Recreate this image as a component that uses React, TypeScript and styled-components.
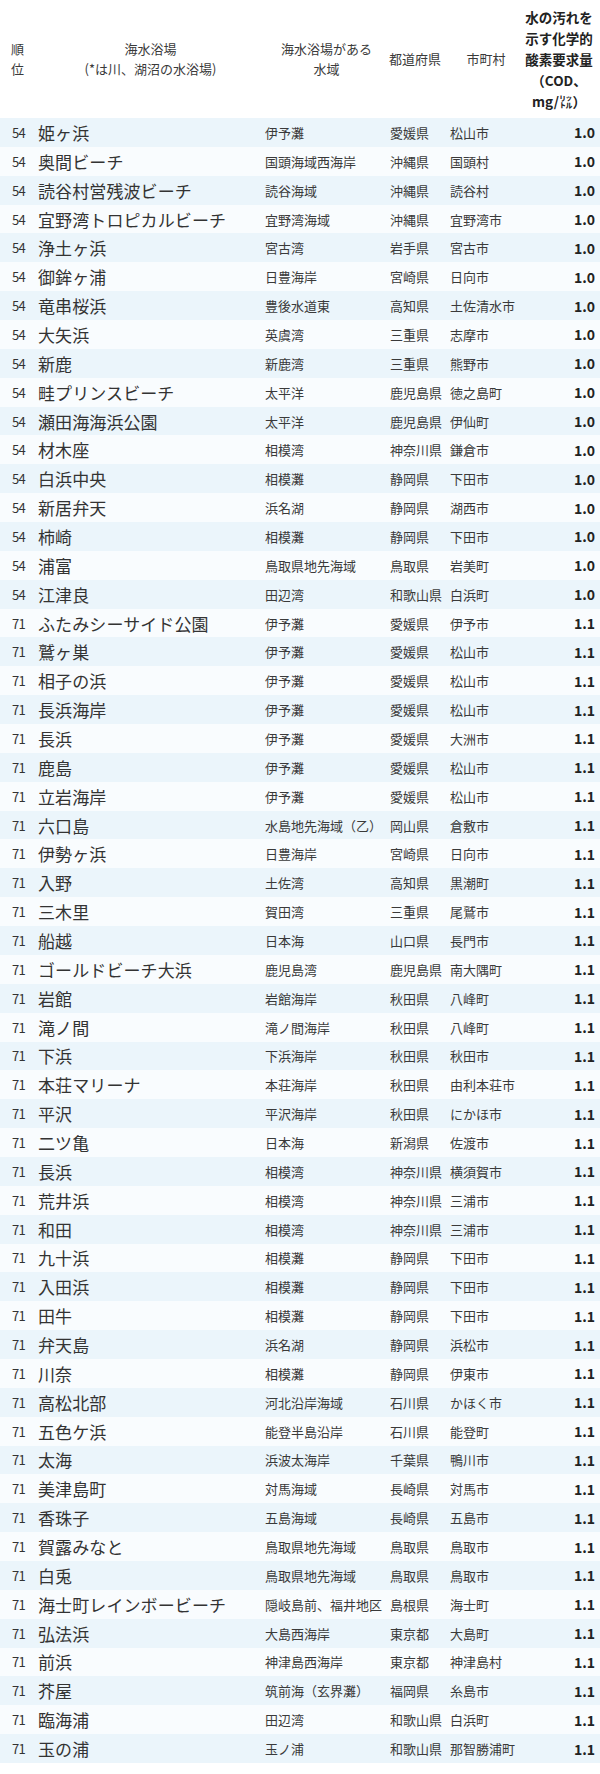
import React from "react";
import styled, { createGlobalStyle, css } from "styled-components";

const GlobalStyle = createGlobalStyle`
  html, body {
    margin: 0;
    padding: 0;
    background: #ffffff;
  }
  body {
    font-family: "Noto Sans CJK JP", "Noto Sans", sans-serif;
    color: #333333;
  }
`;

const COLS = "26px 227px 125px 60px 1fr 72px";

const Table = styled.div`
  width: 600px;
  display: flex;
  flex-direction: column;
  padding-bottom: 11px;
`;

const HeaderRow = styled.div`
  display: grid;
  grid-template-columns: ${COLS};
  height: 118px;
  padding: 0 5px 0 11px;
  align-items: center;
  background: #ffffff;
`;

const HeadCell = styled.div<{ $align?: "left" | "center"; $bold?: boolean }>`
  font-size: 13px;
  line-height: 20px;
  color: #3a3a3a;
  text-align: ${(p) => p.$align ?? "center"};
  white-space: nowrap;
  ${(p) =>
    p.$bold &&
    css`
      font-weight: 700;
      font-size: 13.5px;
      line-height: 21px;
      color: #222222;
    `}
`;

const Row = styled.div<{ $odd: boolean }>`
  display: grid;
  grid-template-columns: ${COLS};
  height: 28.86px;
  padding: 0 5px 0 12px;
  align-items: center;
  background: ${(p) => (p.$odd ? "#ebf5fb" : "#f9fcfe")};
  white-space: nowrap;
`;

const Rank = styled.div`
  font-size: 13px;
  color: #333333;
  letter-spacing: -0.6px;
`;

const Name = styled.div`
  font-size: 17px;
  color: #333333;
  letter-spacing: 0.1px;
`;

const Small = styled.div`
  font-size: 13px;
  color: #3a3a3a;
`;

const Value = styled.div`
  font-size: 14px;
  font-weight: 700;
  color: #222222;
  text-align: right;
`;

type Item = [string, string, string, string, string, string];

const rows: Item[] = [
  ["54", "姫ヶ浜", "伊予灘", "愛媛県", "松山市", "1.0"],
  ["54", "奥間ビーチ", "国頭海域西海岸", "沖縄県", "国頭村", "1.0"],
  ["54", "読谷村営残波ビーチ", "読谷海域", "沖縄県", "読谷村", "1.0"],
  ["54", "宜野湾トロピカルビーチ", "宜野湾海域", "沖縄県", "宜野湾市", "1.0"],
  ["54", "浄土ヶ浜", "宮古湾", "岩手県", "宮古市", "1.0"],
  ["54", "御鉾ヶ浦", "日豊海岸", "宮崎県", "日向市", "1.0"],
  ["54", "竜串桜浜", "豊後水道東", "高知県", "土佐清水市", "1.0"],
  ["54", "大矢浜", "英虞湾", "三重県", "志摩市", "1.0"],
  ["54", "新鹿", "新鹿湾", "三重県", "熊野市", "1.0"],
  ["54", "畦プリンスビーチ", "太平洋", "鹿児島県", "徳之島町", "1.0"],
  ["54", "瀬田海海浜公園", "太平洋", "鹿児島県", "伊仙町", "1.0"],
  ["54", "材木座", "相模湾", "神奈川県", "鎌倉市", "1.0"],
  ["54", "白浜中央", "相模灘", "静岡県", "下田市", "1.0"],
  ["54", "新居弁天", "浜名湖", "静岡県", "湖西市", "1.0"],
  ["54", "柿崎", "相模灘", "静岡県", "下田市", "1.0"],
  ["54", "浦富", "鳥取県地先海域", "鳥取県", "岩美町", "1.0"],
  ["54", "江津良", "田辺湾", "和歌山県", "白浜町", "1.0"],
  ["71", "ふたみシーサイド公園", "伊予灘", "愛媛県", "伊予市", "1.1"],
  ["71", "鷲ヶ巣", "伊予灘", "愛媛県", "松山市", "1.1"],
  ["71", "相子の浜", "伊予灘", "愛媛県", "松山市", "1.1"],
  ["71", "長浜海岸", "伊予灘", "愛媛県", "松山市", "1.1"],
  ["71", "長浜", "伊予灘", "愛媛県", "大洲市", "1.1"],
  ["71", "鹿島", "伊予灘", "愛媛県", "松山市", "1.1"],
  ["71", "立岩海岸", "伊予灘", "愛媛県", "松山市", "1.1"],
  ["71", "六口島", "水島地先海域（乙）", "岡山県", "倉敷市", "1.1"],
  ["71", "伊勢ヶ浜", "日豊海岸", "宮崎県", "日向市", "1.1"],
  ["71", "入野", "土佐湾", "高知県", "黒潮町", "1.1"],
  ["71", "三木里", "賀田湾", "三重県", "尾鷲市", "1.1"],
  ["71", "船越", "日本海", "山口県", "長門市", "1.1"],
  ["71", "ゴールドビーチ大浜", "鹿児島湾", "鹿児島県", "南大隅町", "1.1"],
  ["71", "岩館", "岩館海岸", "秋田県", "八峰町", "1.1"],
  ["71", "滝ノ間", "滝ノ間海岸", "秋田県", "八峰町", "1.1"],
  ["71", "下浜", "下浜海岸", "秋田県", "秋田市", "1.1"],
  ["71", "本荘マリーナ", "本荘海岸", "秋田県", "由利本荘市", "1.1"],
  ["71", "平沢", "平沢海岸", "秋田県", "にかほ市", "1.1"],
  ["71", "二ツ亀", "日本海", "新潟県", "佐渡市", "1.1"],
  ["71", "長浜", "相模湾", "神奈川県", "横須賀市", "1.1"],
  ["71", "荒井浜", "相模湾", "神奈川県", "三浦市", "1.1"],
  ["71", "和田", "相模湾", "神奈川県", "三浦市", "1.1"],
  ["71", "九十浜", "相模灘", "静岡県", "下田市", "1.1"],
  ["71", "入田浜", "相模灘", "静岡県", "下田市", "1.1"],
  ["71", "田牛", "相模灘", "静岡県", "下田市", "1.1"],
  ["71", "弁天島", "浜名湖", "静岡県", "浜松市", "1.1"],
  ["71", "川奈", "相模灘", "静岡県", "伊東市", "1.1"],
  ["71", "高松北部", "河北沿岸海域", "石川県", "かほく市", "1.1"],
  ["71", "五色ケ浜", "能登半島沿岸", "石川県", "能登町", "1.1"],
  ["71", "太海", "浜波太海岸", "千葉県", "鴨川市", "1.1"],
  ["71", "美津島町", "対馬海域", "長崎県", "対馬市", "1.1"],
  ["71", "香珠子", "五島海域", "長崎県", "五島市", "1.1"],
  ["71", "賀露みなと", "鳥取県地先海域", "鳥取県", "鳥取市", "1.1"],
  ["71", "白兎", "鳥取県地先海域", "鳥取県", "鳥取市", "1.1"],
  ["71", "海士町レインボービーチ", "隠岐島前、福井地区", "島根県", "海士町", "1.1"],
  ["71", "弘法浜", "大島西海岸", "東京都", "大島町", "1.1"],
  ["71", "前浜", "神津島西海岸", "東京都", "神津島村", "1.1"],
  ["71", "芥屋", "筑前海（玄界灘）", "福岡県", "糸島市", "1.1"],
  ["71", "臨海浦", "田辺湾", "和歌山県", "白浜町", "1.1"],
  ["71", "玉の浦", "玉ノ浦", "和歌山県", "那智勝浦町", "1.1"],
];

export default function App() {
  return (
    <>
      <GlobalStyle />
      <Table>
        <HeaderRow>
          <HeadCell $align="left">
            順<br />位
          </HeadCell>
          <HeadCell>
            海水浴場
            <br />
            (*は川、湖沼の水浴場)
          </HeadCell>
          <HeadCell>
            海水浴場がある
            <br />
            水域
          </HeadCell>
          <HeadCell $align="left">都道府県</HeadCell>
          <HeadCell>市町村</HeadCell>
          <HeadCell $bold>
            水の汚れを
            <br />
            示す化学的
            <br />
            酸素要求量
            <br />
            （COD、
            <br />
            mg/㍑）
          </HeadCell>
        </HeaderRow>
        {rows.map((r, i) => (
          <Row key={i} $odd={i % 2 === 0}>
            <Rank>{r[0]}</Rank>
            <Name>{r[1]}</Name>
            <Small>{r[2]}</Small>
            <Small>{r[3]}</Small>
            <Small>{r[4]}</Small>
            <Value>{r[5]}</Value>
          </Row>
        ))}
      </Table>
    </>
  );
}
